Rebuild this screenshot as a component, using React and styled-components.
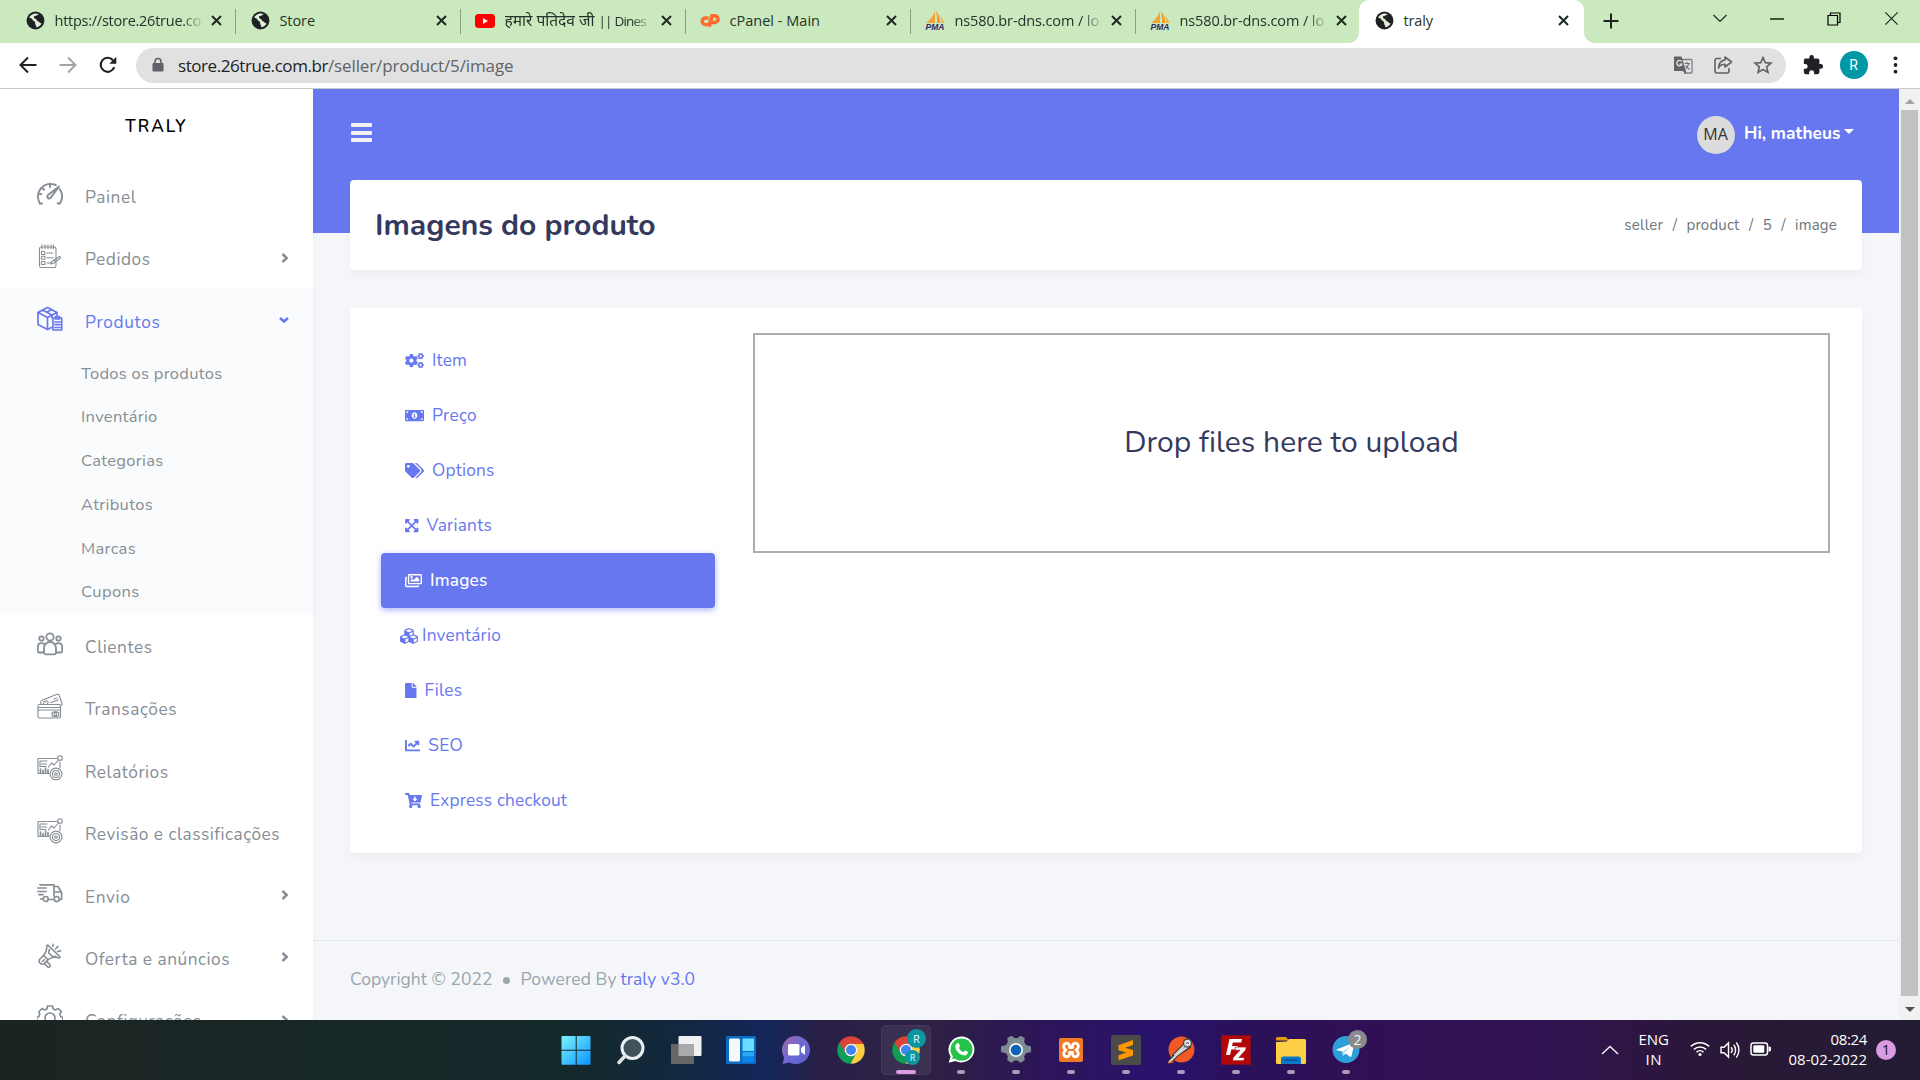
import React, { useLayoutEffect, useRef, useState } from "react";
import styled, { createGlobalStyle, css } from "styled-components";
import {
  FaCogs, FaMoneyBillAlt, FaTags, FaExpandArrowsAlt, FaRegImages, FaCubes, FaFile, FaChartLine, FaCartArrowDown,
} from "react-icons/fa";

const brand = "#6777ef";
const uiFont = `"Nunito", "Lato", "Open Sans", sans-serif`;
const osFont = `"Segoe UI", "Open Sans", "Noto Sans", sans-serif`;

const GlobalStyle = createGlobalStyle`
  *, *::before, *::after { box-sizing: border-box; }
  html, body { margin: 0; padding: 0; overflow: hidden; }
  svg { display: block; flex: none; }
`;

/* ---------- text tracked to a known measure ---------- */
const Tracked = styled.span`
  display: inline-block;
  white-space: nowrap;
`;

function Fit({ w, children }) {
  const ref = useRef(null);
  const [spacing, setSpacing] = useState(0);
  useLayoutEffect(() => {
    const natural = ref.current.getBoundingClientRect().width;
    const n = String(children).length;
    setSpacing((w + 1.5 - natural) / n);
  }, [w, children]);
  return <Tracked ref={ref} style={{ letterSpacing: spacing }}>{children}</Tracked>;
}

const Desktop = styled.div`
  width: 1920px;
  height: 1080px;
  display: flex;
  flex-direction: column;
  overflow: hidden;
  background: #fff;
  font-family: ${uiFont};
`;

/* ---------- browser tab strip ---------- */
const TabStrip = styled.div`
  height: 43px;
  flex: none;
  display: flex;
  padding-left: 10px;
  background: #cae9be;
  font-family: ${osFont};
  font-size: 14.5px;
  color: #26322a;
`;

const TabBox = styled.div`
  position: relative;
  width: 225px;
  height: 43px;
  display: flex;
  align-items: center;
  padding: 0 13.5px 2px 15px;
  gap: 9.5px;
  ${(p) => p.$active ? css`
    margin-left: -1px;
    padding-right: 15px;
    background: #fff;
    border-radius: 10px 10px 0 0;
    &::before, &::after {
      content: "";
      position: absolute;
      bottom: 0;
      width: 10px;
      height: 10px;
    }
    &::before { left: -10px; background: radial-gradient(circle at 0 0, transparent 9.5px, #fff 10px); }
    &::after { right: -10px; background: radial-gradient(circle at 100% 0, transparent 9.5px, #fff 10px); }
  ` : ""}
`;

const TabDivider = styled.i`
  position: absolute;
  right: -1px;
  top: 9px;
  width: 1.5px;
  height: 25px;
  background: #84a07c;
`;

const TabIcon = styled.span`
  width: 20px;
  display: flex;
  justify-content: center;
`;

const TabTitle = styled.span`
  flex: 1;
  white-space: nowrap;
  line-height: 22px;
  margin-right: -1px;
  ${(p) => p.$fade && css`
    mask-image: linear-gradient(90deg, #000 86%, rgba(0, 0, 0, 0.2) 98%);
  `}
`;

const Hindi = styled.span`
  display: inline-block;
  margin-right: 4px;
  font-size: 15.5px;
  line-height: 20px;
`;

const Narrow = styled.span`
  font-size: 13.5px;
`;

const NewTab = styled.div`
  width: 53px;
  display: flex;
  align-items: center;
  justify-content: center;
  padding-bottom: 1px;
`;

const WindowButtons = styled.div`
  margin-left: auto;
  height: 37px;
  display: flex;
  align-items: center;
  gap: 43px;
  padding-right: 21px;
`;

/* ---------- address bar ---------- */
const Toolbar = styled.div`
  height: 46px;
  flex: none;
  display: flex;
  align-items: center;
  padding: 0 20px 1px 17.5px;
  border-bottom: 1px solid #c6c8ca;
  font-family: ${osFont};
`;

const NavButtons = styled.div`
  width: 118px;
  display: flex;
  gap: 20px;
`;

const Address = styled.div`
  width: 1650px;
  height: 35px;
  border-radius: 18px;
  background: #e1e1e1;
  display: flex;
  align-items: center;
  padding: 0 13px 0 14px;
`;

const Url = styled.div`
  flex: 1;
  margin-left: 12.5px;
  padding-top: 1px;
  font-size: 17px;
  line-height: 24px;
  color: #202124;
`;

const UrlPath = styled.b`
  font-weight: 400;
  color: #5f6368;
`;

const AddressIcons = styled.div`
  display: flex;
  gap: 20px;
`;

const PuzzleSlot = styled.span`
  margin-left: 16px;
`;

const ProfileBadge = styled.span`
  width: 28px;
  height: 28px;
  margin: 0 25px 0 16px;
  border-radius: 50%;
  background: #0097a7;
  color: #fff;
  font: 400 14px/28px Roboto, sans-serif;
  text-align: center;
`;

/* ---------- page ---------- */
const Viewport = styled.div`
  height: 931px;
  flex: none;
  display: flex;
  overflow: hidden;
`;

const Sidebar = styled.aside`
  position: relative;
  z-index: 1;
  width: 313px;
  flex: none;
  background: #fff;
  box-shadow: 0 4px 8px rgba(0, 0, 0, 0.03);
`;

const Brand = styled.div`
  height: 75px;
  display: flex;
  align-items: center;
  justify-content: center;
  padding-bottom: 1px;
  font-size: 17px;
  font-weight: 650;
  color: #000;
`;

const MenuGroup = styled.div`
  background: ${(p) => (p.$active ? "#fafbfc" : "transparent")};
`;

const MenuRow = styled.div`
  height: 62.45px;
  display: flex;
  align-items: center;
  padding: 0 24.5px 0 37px;
  font-size: 17.3px;
  font-weight: 450;
  color: ${(p) => (p.$active ? brand : "#868e96")};
  > svg:first-child { margin: -3px 22px 0 0; }
`;

const MenuLabel = styled.span`
  flex: 1;
  padding-top: 4.5px;
`;

const SubRow = styled.div`
  height: 43.75px;
  display: flex;
  align-items: center;
  padding-left: 81px;
  font-size: 16.5px;
  color: #868e96;
`;

const Main = styled.main`
  flex: 1;
  display: flex;
  flex-direction: column;
  background: linear-gradient(${brand} 144px, #f4f6f9 144px);
`;

const Navbar = styled.header`
  height: 91px;
  flex: none;
  display: flex;
  align-items: center;
  padding: 0 45px 4px 38px;
`;

const Hamburger = styled.div`
  width: 21px;
  height: 19px;
  display: flex;
  flex-direction: column;
  justify-content: space-between;
  i { height: 4px; border-radius: 1px; background: #f2f2f4; }
`;

const Account = styled.div`
  margin-left: auto;
  display: flex;
  align-items: center;
  color: #fff;
  font-size: 17.3px;
  font-weight: 700;
`;

const UserName = styled.span`
  padding-top: 1px;
`;

const Avatar = styled.span`
  width: 38px;
  height: 38px;
  margin: 4px 9.5px 0 0;
  border-radius: 50%;
  background: #dcdcdc;
  color: #333;
  font: 400 16px/37px "Open Sans", sans-serif;
  text-align: center;
`;

const Caret = styled.i`
  margin: -2px 0 0 3.5px;
  border: 5px solid transparent;
  border-top-color: #fff;
  border-bottom: 0;
`;

const Card = styled.section`
  flex: none;
  margin: 0 37px 0;
  background: #fff;
  border-radius: 4px;
  box-shadow: 0 5px 10px rgba(0, 0, 0, 0.03);
`;

const TitleCard = styled(Card)`
  height: 90px;
  margin-bottom: 38px;
  padding: 0 25px 0 25px;
  display: flex;
  align-items: center;
  justify-content: space-between;
`;

const Title = styled.h1`
  margin: 2.5px 0 0;
  font-size: 30px;
  line-height: 36px;
  font-weight: 700;
  color: #34395e;
`;

const Crumbs = styled.nav`
  display: flex;
  gap: 9.5px;
  font-size: 15px;
  color: #6c757d;
`;

const EditorCard = styled(Card)`
  height: 545px;
  padding: 25px 32px 25px 31px;
  display: flex;
  gap: 38px;
`;

const Pills = styled.div`
  width: 334px;
`;

const Pill = styled.div`
  height: 55px;
  display: flex;
  align-items: center;
  padding-left: ${(p) => (p.$tight ? 19 : 24)}px;
  gap: ${(p) => (p.$tight ? 4 : 8)}px;
  border-radius: 4px;
  font-size: 17.3px;
  font-weight: 380;
  color: ${brand};
  ${(p) => p.$active && css`
    background: ${brand};
    color: #fff;
    font-weight: 500;
    box-shadow: 0 2px 6px #acb5f6;
  `}
`;

const Dropzone = styled.div`
  flex: 1;
  height: 220px;
  display: flex;
  align-items: center;
  justify-content: center;
  padding-bottom: 2px;
  border: 2px solid #adadad;
  font-size: 30px;
  font-weight: 380;
  color: #34395e;
`;

const Footer = styled.footer`
  height: 80px;
  margin-top: auto;
  display: flex;
  align-items: center;
  padding: 0 0 3px 37px;
  border-top: 1px solid #e3eaef;
  font-size: 17.5px;
  font-weight: 380;
  color: #98a6ad;
`;

const Bullet = styled.i`
  width: 7px;
  height: 7px;
  margin: 2px 10.5px 0;
  border-radius: 50%;
  background: #98a6ad;
`;

const FooterLink = styled.span`
  margin-left: 4px;
  color: ${brand};
`;

const Scrollbar = styled.div`
  width: 21px;
  flex: none;
  display: flex;
  flex-direction: column;
  align-items: center;
  background: #f1f1f1;
`;

const ScrollArrow = styled.div`
  height: ${(p) => (p.$down ? 24 : 21)}px;
  display: flex;
  align-items: center;
  padding-top: ${(p) => (p.$down ? 2 : 3)}px;
  &::before {
    content: "";
    border: 5px solid transparent;
    ${(p) => (p.$down ? "border-top-color: #505050; border-bottom: 0;" : "border-bottom-color: #a3a3a3; border-top: 0;")}
  }
`;

const Thumb = styled.div`
  width: 17px;
  flex: 1;
  background: #c1c1c1;
`;

/* ---------- taskbar ---------- */
const Taskbar = styled.div`
  height: 60px;
  flex: none;
  display: flex;
  align-items: center;
  padding: 0 24px 0 548px;
  background: linear-gradient(90deg, #1c2422 0, #14292a 560px, #11283f 680px, #13265a 765px, #2a2048 820px,
    #2d2142 930px, #2c1558 1040px, #29126c 1160px, #2b1158 1260px, #330f55 1390px, #30124f 1560px, #2a1838 1700px, #231c33 1920px);
  color: #fff;
  font-family: ${osFont};
`;

const AppSlot = styled.div`
  position: relative;
  width: 55px;
  height: 60px;
  flex: none;
  display: flex;
  align-items: center;
  justify-content: center;
`;

const AppTile = styled.div`
  width: 50px;
  height: 50px;
  display: flex;
  align-items: center;
  justify-content: center;
  border-radius: 5px;
  ${(p) => p.$active && css`
    background: rgba(255, 255, 255, 0.07);
    box-shadow: inset 0 0 0 1px rgba(255, 255, 255, 0.06);
  `}
`;

const Indicator = styled.i`
  position: absolute;
  bottom: 6px;
  left: 50%;
  transform: translateX(-50%);
  width: ${(p) => (p.$active ? 20 : 8)}px;
  height: 4px;
  border-radius: 2px;
  background: ${(p) => (p.$active ? "#d99ce2" : "#a69bb8")};
`;

const AppBadge = styled.span`
  position: absolute;
  left: ${(p) => p.$x}px;
  top: ${(p) => p.$y}px;
  width: ${(p) => p.$size}px;
  height: ${(p) => p.$size}px;
  border-radius: 50%;
  background: ${(p) => p.$bg};
  color: #f0f5f5;
  font-size: ${(p) => p.$font}px;
  line-height: ${(p) => p.$size}px;
  text-align: center;
`;

const Tray = styled.div`
  margin-left: auto;
  display: flex;
  align-items: center;
  font-size: 15px;
  line-height: 20px;
`;

const TrayText = styled.div`
  display: flex;
  flex-direction: column;
  align-items: ${(p) => p.$align};
  margin-right: ${(p) => p.$gap}px;
  padding-bottom: 2px;
`;

const TrayIcons = styled.div`
  display: flex;
  gap: 10px;
  margin-right: ${(p) => p.$gap}px;
`;

const Notice = styled.span`
  width: 20px;
  height: 20px;
  border-radius: 50%;
  background: #d99ce2;
  color: #111;
  font-size: 14px;
  text-align: center;
`;

/* ---------- browser drawings ---------- */
const Globe = () => (
  <svg width="19" height="19" viewBox="0 0 24 24">
    <circle cx="12" cy="12" r="11.3" fill="#202124" />
    <path d="M14 2.500c-2 1-1.500 2.500-3.500 3.300-2 .8-2.500 2-1.500 3.200s3.500.4 4.200 1.700c.6 1.200 2.300 1.400 3.600 1.500 1.500.2 2.200 1.600 4.600 1.300-.6 3.500-3 6.200-6 7.300.7-1.700-.4-2.600-1.500-3.200-1.600-.9-.6-2.700-2.100-3.500-1.500-.9-3.100-.6-4.200-1.900C6.400 10.700 4.500 11 2.500 10.800 3 8 4.600 5.700 6.500 4.300 8.500 2.800 11.500 2 14 2.500z" fill="#dff0d8" transform="rotate(18 12 12) scale(.92) translate(1 1)" />
  </svg>
);
const Cross = ({ s = 11, w = 2 }) => (
  <svg width={s} height={s} viewBox="0 0 11 11" stroke="#1f2a22" strokeWidth={w}><path d="M1 1l9 9M10 1l-9 9" /></svg>
);
const YouTube = () => (
  <svg width="20" height="14" viewBox="0 0 20 14"><rect width="20" height="14" rx="3.500" fill="#f00" /><path d="M8 4l5 3-5 3z" fill="#fff" /></svg>
);
const CPanel = () => (
  <svg width="21" height="15" viewBox="0 0 21 15" fill="none" stroke="#ff6c2c" strokeWidth="3.400">
    <path d="M8.500 5H5.500a3.200 3.200 0 0 0 0 6.600H8c1 0 1.500-.7 1.700-1.500L12 2" /><path d="M10.500 9.500h4.200a3.400 3.400 0 0 0 0-6.800h-2.500l-2.900 11" />
  </svg>
);
const Pma = () => (
  <svg width="20" height="20" viewBox="0 0 20 20">
    <path d="M10 0v12H1C5 9 8.500 5 10 0z" fill="#f2a33a" /><path d="M11 0c1 5 1.500 9 1 12h3c.5-4-1.500-9-4-12z" fill="#f59a1b" />
    <path d="M14.500 4c1.500 3 2 5.500 1.500 8h3.500c-1-3-3-6-5-8z" fill="#f7b04c" />
    <text x="10" y="19.400" textAnchor="middle" fontFamily="Liberation Sans, sans-serif" fontSize="8.500" fontWeight="700" fontStyle="italic" fill="#2e2a63">PMA</text>
  </svg>
);
const Line = ({ w, h = w, d, c = "#202124", sw = 2 }) => (
  <svg width={w} height={h} viewBox={`0 0 ${w} ${h}`} fill="none" stroke={c} strokeWidth={sw}><path d={d} /></svg>
);
const Reload = () => (
  <svg width="20" height="20" viewBox="0 0 20 20" fill="none" stroke="#202124" strokeWidth="2.100">
    <path d="M16.300 12.200A7 7 0 1 1 15 5.200" /><path d="M18.300 1.800v7h-7z" fill="#202124" stroke="none" />
  </svg>
);
const Lock = () => (
  <svg width="16" height="16" viewBox="0 0 16 16"><rect x="2.500" y="6" width="11" height="8.500" rx="1" fill="#5f6368" /><path d="M5 6V4.500a3 3 0 0 1 6 0V6" fill="none" stroke="#5f6368" strokeWidth="1.600" /></svg>
);
const Translate = () => (
  <svg width="20" height="20" viewBox="0 0 20 20">
    <path d="M8 4.500h10a1 1 0 0 1 1 1V17a1 1 0 0 1-1 1h-7" fill="none" stroke="#7c7f83" strokeWidth="1.300" />
    <path d="M2 1.500h6.500L13 16H2a1 1 0 0 1-1-1V2.500a1 1 0 0 1 1-1z" fill="#5f6368" />
    <path d="M10 16l2.500 3 .5-3z" fill="#5f6368" />
    <path d="M8.700 6.500A2.700 2.700 0 1 0 9 9.200H6.500" fill="none" stroke="#e1e1e1" strokeWidth="1.300" />
    <path d="M11.500 8.500H17M14 7v1.500M15.800 8.500c-.5 2.500-2 4-3 5M12.800 10.500c1 1.500 2.200 2.700 3.700 4" fill="none" stroke="#6f7276" strokeWidth="1.200" />
  </svg>
);
const Share = () => (
  <svg width="20" height="20" viewBox="0 0 20 20" fill="none" stroke="#5f6368" strokeWidth="1.600">
    <path d="M8 3.500H4a2 2 0 0 0-2 2V16a2 2 0 0 0 2 2h10a2 2 0 0 0 2-2v-3" /><path d="M12 2l6.500 5-6.500 5V9.300c-3 0-5 1-6.500 3.700C5.800 8.500 8 5.500 12 4.900z" strokeLinejoin="round" />
  </svg>
);
const Star = () => (
  <svg width="20" height="20" viewBox="0 0 24 24" fill="none" stroke="#5f6368" strokeWidth="2"><path d="M12 3l2.700 6.200 6.800.6-5.100 4.500 1.500 6.600L12 17.400l-5.900 3.500 1.500-6.600-5.100-4.500 6.800-.6z" /></svg>
);
const Puzzle = () => (
  <svg width="22" height="22" viewBox="0 0 24 24" fill="#202124"><path d="M20.500 11H19V7a2 2 0 0 0-2-2h-4V3.500a2.500 2.500 0 0 0-5 0V5H4a2 2 0 0 0-2 2v3.800h1.500a2.700 2.700 0 0 1 0 5.400H2V20a2 2 0 0 0 2 2h3.800v-1.500a2.700 2.700 0 0 1 5.400 0V22H17a2 2 0 0 0 2-2v-4h1.500a2.500 2.500 0 0 0 0-5z" /></svg>
);
const Dots = () => (
  <svg width="5" height="18" viewBox="0 0 5 18" fill="#202124"><circle cx="2.500" cy="2.300" r="1.900" /><circle cx="2.500" cy="9" r="1.900" /><circle cx="2.500" cy="15.700" r="1.900" /></svg>
);

/* ---------- sidebar drawings ---------- */
const SideIcon = ({ sw = 1.5, children }) => (
  <svg width="26" height="26" viewBox="0 0 26 26" fill="none" stroke="currentColor" strokeWidth={sw} strokeLinecap="round" strokeLinejoin="round">{children}</svg>
);
const Gauge = () => (
  <SideIcon sw={2}>
    <path d="M5 22.500l-2 .2C.3 18 .2 12 3.700 7.700 7.500 3 13.500 1.800 18.700 4M22.800 8.300c3 4.500 3 10-.1 14.400l-2-.4M13 2.500v3.400M5 7l2 1.600M1.500 13h2.600" />
    <path d="M22 5.500L11 14c-1.800 2.300.8 4.500 2.800 2.700z" />
  </SideIcon>
);
const Orders = () => (
  <SideIcon sw={1.1}>
    <rect x="2.500" y="4" width="16.500" height="20.500" rx="1.800" />
    <path d="M5 1.800v4M8 1.800v4M11 1.800v4M14 1.800v4M16.500 1.800v4M10 10h6M10 14.800h6M10 20h4" />
    <rect x="4.500" y="8.500" width="3.400" height="3" /><rect x="4.500" y="13.300" width="3.400" height="3" /><rect x="4.500" y="18.500" width="3.400" height="3" />
    <path d="M13.500 21l1.500-2.800 7-4.500c1.400-.4 2 .7 1.200 1.500l-6.800 5zM17 17l1.500 2" />
  </SideIcon>
);
const Box = () => (
  <SideIcon sw={1.7}>
    <path d="M1 6.500L10.500 1.500 20 6.500v3M1 6.500v12l9.500 5 4-2M1 6.500l9.500 5 9.500-5M10.500 11.500v12M5.500 4l9.500 5v3M9.500 6.200l5.500-2.700" />
    <path d="M16 12h8.700v12H16z" /><path d="M18.500 10.500h4v2.500h-4zM18 16h5M18 18.700h5M18 21.500h5" />
  </SideIcon>
);
const People = () => (
  <SideIcon sw={1.8}>
    <circle cx="13" cy="6" r="3.700" /><circle cx="4.500" cy="7.500" r="2.200" /><circle cx="21.500" cy="7.500" r="2.200" />
    <path d="M7 21.500v-4.500a6 6 0 0 1 12 0v4.500c0 1-1 1.800-2 1.800H9c-1 0-2-.8-2-1.800zM7 21.500H2c-.8 0-1.200-.5-1.200-1.200V16c0-2.500 1.400-3.800 3.700-3.800 1.200 0 2.200.4 3 1.100M19 21.500h5c.8 0 1.200-.5 1.200-1.200V16c0-2.500-1.400-3.800-3.700-3.800-1.200 0-2.200.4-3 1.100" />
  </SideIcon>
);
const Cards = () => (
  <SideIcon sw={1.1}>
    <rect x="1" y="11.500" width="22.500" height="13.500" rx="1.500" /><path d="M1 14.500h22.500M1 17h22.500" />
    <path d="M3.800 11.500V8.800c0-.8.4-1.200 1-1.400L20 1.200c1-.4 1.700 0 2 .8l3 8.500c.3.900-.3 1.500-1.500 1.900M6.500 10.500l.8-2 2.700-.7 1.200 1-.7 2.200M14 9.500l7-2.500M17 6l3-1" />
    <circle cx="17.200" cy="21.200" r="2.300" /><circle cx="19.500" cy="21.200" r="2.300" />
  </SideIcon>
);
const Report = () => (
  <SideIcon sw={1.1}>
    <path d="M12 18.500H1V3.500h19M23 7v6M1 3.500v15" />
    <path d="M3 6h7M4.500 9h5M3 6v5.500h6" /><path d="M3.500 18v-4M6 18v-2.500M8.500 18v-5M11 18v-3.500" strokeWidth="1.700" />
    <path d="M11.500 12l3-4 2.500 2 4.500-5" /><circle cx="23" cy="3" r="2.300" />
    <circle cx="19" cy="19" r="5.900" /><circle cx="19" cy="19" r="3.500" /><circle cx="19" cy="19" r="1.300" />
  </SideIcon>
);
const Truck = () => (
  <SideIcon sw={1.7}>
    <path d="M3 4.800h14V16M17 6.500h4l3.600 6v7h-2M1 8h8M1 11.500h8M2 14.700h4M3.500 19h2.700M11 19.500h6M18.500 12h5.500" />
    <circle cx="8.700" cy="19" r="2.500" /><circle cx="19.700" cy="19" r="2.500" />
  </SideIcon>
);
const Megaphone = () => (
  <SideIcon sw={1.6}>
    <path d="M10.800 2.200L22.800 13.500c.6.900-.4 1.600-1.300 1.200-3.800-1-7-.5-10.500 2L6.500 12.500C9 9.500 10 6.500 9.700 3.300c0-1 .5-1.500 1.100-1.100zM12.300 6.500l-.6 3.500 4 3.700 3.300-.5" />
    <path d="M6.500 12.500l-3.700 3.700c-1.200 1.400-.8 3.200.5 4.200 1.200 1 3 1 4.200 0L11 16.700M5.500 18.500l2-2M10 18.500l3.300 3.700c.2 1.500-1.300 2.500-2.500 1.800L7.300 20.500M16 3.500V1.200M18.500 6l2.500-2.700M20.500 8.500l3-.6" />
  </SideIcon>
);
const Gear = () => (
  <SideIcon sw={1.7}>
    <path d="M10.500 1h5l.8 3 2.200 1 2.800-1.500 3 3-1.500 2.700 1 2.500 2 .6v5l-2.500.7-1 2.300 1.500 2.700-3.300 3.200-2.600-1.500-2.400 1-.7 2h-4.600l-.7-2-2.400-1-2.600 1.500-3.300-3.200 1.500-2.700-1-2.300-2-.7v-5l2-.6 1-2.500L2 6.500l3-3L7.700 5l2.200-1z" /><circle cx="13" cy="13" r="5" />
  </SideIcon>
);
const Chevron = ({ down }) => (
  <svg width={down ? 10 : 8} height="10" viewBox={down ? "0 0 10 10" : "0 0 8 10"} fill="none" stroke="currentColor" strokeWidth="2.500">
    <path d={down ? "M1 3l4 3.500L9 3" : "M1.500 1l4.200 4-4.200 4"} />
  </svg>
);

/* ---------- taskbar drawings ---------- */
const Svg32 = ({ children }) => <svg width="32" height="32" viewBox="0 0 32 32">{children}</svg>;
const WinLogo = () => (
  <Svg32>
    <defs><linearGradient id="win" x1="0" y1="0" x2="1" y2="1"><stop stopColor="#7df3ff" /><stop offset="1" stopColor="#0a94ff" /></linearGradient></defs>
    <path d="M2.500 2h13.200v13.700H1.500V3a1 1 0 0 1 1-1zM16.700 2h12.800a1 1 0 0 1 1 1v12.700H16.700zM1.500 16.700h14.200v14H2.500a1 1 0 0 1-1-1zM16.700 16.700h13.800v13a1 1 0 0 1-1 1H16.700z" fill="url(#win)" />
  </Svg32>
);
const Search = () => (
  <Svg32><circle cx="17.500" cy="14" r="10.500" fill="#40535d" stroke="#eceff1" strokeWidth="3" /><path d="M10 22l-6 6.500" stroke="#dfe3e6" strokeWidth="3.500" strokeLinecap="round" /></Svg32>
);
const TaskView = () => (
  <Svg32><rect x="8.500" y="2" width="23" height="20" rx="1" fill="#f1f1f1" /><rect x="1" y="10" width="23" height="20" rx="1" fill="#666" /><path d="M8.500 10H24v12H8.500z" fill="#a9aaab" /></Svg32>
);
const Widgets = () => (
  <Svg32><rect x="1" y="2" width="30" height="28" rx="1.500" fill="#0b6cc4" /><rect x="4" y="4.500" width="11" height="23" rx="1.500" fill="#f6f8fb" /><rect x="17.500" y="4.500" width="11.500" height="12.500" fill="#6bdcff" /><rect x="17.500" y="18" width="11.500" height="4.500" fill="#27a7f7" /><rect x="17.500" y="23" width="11.500" height="5" fill="#0a85ee" /></Svg32>
);
const Chat = () => (
  <Svg32>
    <defs><linearGradient id="chat" x1="0" y1="0" x2="1" y2="1"><stop stopColor="#a06ca8" /><stop offset=".5" stopColor="#6f67d2" /><stop offset="1" stopColor="#5a5fce" /></linearGradient></defs>
    <path d="M16 2a14 14 0 1 1-6.500 26.400L2.500 30l1.700-6.500A14 14 0 0 1 16 2z" fill="url(#chat)" />
    <rect x="8" y="10" width="11.500" height="11.500" rx="1.500" fill="#fff" /><path d="M21 14l4-3v10l-4-3z" fill="#fff" />
  </Svg32>
);
const Chrome = () => (
  <Svg32>
    <path d="M16 16L4.050 9.100A13.800 13.800 0 0 1 27.950 9.100z" fill="#db4437" />
    <path d="M16 16L27.950 9.100A13.800 13.800 0 0 1 16 29.800z" fill="#ffcd40" />
    <path d="M16 16L16 29.800A13.800 13.800 0 0 1 4.050 9.100z" fill="#0f9d58" />
    <path d="M16 9.700h12.300L22 14z" fill="#ffcd40" /><path d="M16 9.700h12.300l-.4-1H15z" fill="#db4437" />
    <path d="M10.500 19.100L4.400 8.500l5.600 4z" fill="#db4437" /><path d="M21.500 19.100L15.500 29.800l-1.500-7z" fill="#0f9d58" />
    <circle cx="16" cy="16" r="6.300" fill="#f5f5f5" /><circle cx="16" cy="16" r="5" fill="#4285f4" />
  </Svg32>
);
const WhatsApp = () => (
  <Svg32>
    <path d="M16.500 2.500A13 13 0 1 1 10.300 27L3.700 28.800l1.800-6.400A13 13 0 0 1 16.500 2.500z" fill="#fff" />
    <circle cx="16.500" cy="15.600" r="11" fill="#25c348" /><path d="M7 25.300l1.500-4.500 3 3z" fill="#25c348" />
    <path d="M12 9.500c1-.8 1.700-.5 2.100.6l.8 1.900c.2.800-.8 1.400-1 1.900 1 2 2.500 3.300 4.500 4.200.7-.2 1-1.400 1.800-1.500l2.500 1.200c.5.500 0 3-2 3.500-5 1-11.500-5-10.300-10 .2-.7.900-1.400 1.600-1.800z" fill="#fff" />
  </Svg32>
);
const Settings = () => (
  <Svg32>
    <path d="M11.500 1.700l3 2.300h3l3-2.300 4.200 2.300-.5 4 1.800 3 5 1.500v5.500l-5 1.300-1.800 3 .5 4-4.200 2.500-3-2.400h-3l-3 2.400L7.300 26.300l.5-4-1.800-3-5-1.300v-5.500l5-1.500 1.800-3-.5-4z" fill="#7e8b92" />
    <circle cx="16" cy="16" r="7" fill="#f2f3f4" /><circle cx="16" cy="16" r="5.300" fill="#0c63b5" />
  </Svg32>
);
const Xampp = () => (
  <Svg32><rect x="4" y="4" width="24" height="24" rx="2" fill="#f27a25" /><path d="M10.500 9.500c2-.8 4 .5 4 2.500v1.500h3V12c0-2 2-3.300 4-2.500 2.500 1 2.500 5-.5 6.500 3 1.500 3 5.500.5 6.500-2 .8-4-.5-4-2.500v-1.500h-3V20c0 2-2 3.300-4 2.500-2.500-1-2.500-5 .5-6.500-3-1.500-3-5.500-.5-6.500z" fill="none" stroke="#fff" strokeWidth="2.800" strokeLinejoin="round" /></Svg32>
);
const Sublime = () => (
  <Svg32><rect x="1" y="1" width="30" height="30" rx="1.500" fill="#4a4a4a" /><path d="M8.500 11.200L23 6v5l-8 2.800L23 16v5.500L8.500 26.300v-5l8-2.800-8-2.300z" fill="#ff9800" /></Svg32>
);
const Postman = () => (
  <Svg32><circle cx="16.500" cy="15.500" r="13" fill="#f15a24" /><path d="M21.500 9.500L9 22M24 12.500L12 20.500 5 27.500" stroke="#33312f" strokeWidth="4" strokeLinecap="round" /><path d="M21.500 9.500L10 21M23.500 12L12 20.500 4.500 28" stroke="#d5d5d5" strokeWidth="2.200" strokeLinecap="round" /><circle cx="22.500" cy="9" r="4" fill="#ddd" stroke="#444" strokeWidth="1.300" /><path d="M21 9.500a2 2 0 0 1 3 0" stroke="#444" fill="none" /><path d="M2.500 29.500l4.500-3 2 2z" fill="#f15a24" /></Svg32>
);
const FileZilla = () => (
  <Svg32>
    <rect x="2" y="2" width="28" height="28" fill="#b30808" stroke="#b30808" strokeWidth="2" strokeDasharray="2 1.200" />
    <path d="M6 21L9.500 5H22l-.8 3.500h-8.400l-.8 3.500h6l-.7 3.500h-6L10 21z" fill="#fff" /><path d="M15.500 13h10.800l-.6 3-6.700 7.500h5.500l-.7 3.200H12.500l.7-3.200 6.700-7.300h-5z" fill="#fff" stroke="#b30808" strokeWidth=".7" />
  </Svg32>
);
const Folder = () => (
  <Svg32><path d="M1 4.500a1.500 1.500 0 0 1 1.500-1.500H11l3 3.500H1z" fill="#dd9c05" /><path d="M1 8l10.500-.5L14 5h15.500A1.500 1.500 0 0 1 31 6.500v22a1.500 1.500 0 0 1-1.500 1.500h-27A1.500 1.500 0 0 1 1 28.500z" fill="#fdcf44" /><path d="M6 30v-5a2.500 2.500 0 0 1 2.500-2.500h15A2.500 2.500 0 0 1 26 25v5z" fill="#0b77c9" /><path d="M9.500 26h13" stroke="#034a85" strokeWidth="1.200" /></Svg32>
);
const Telegram = () => (
  <Svg32><circle cx="16" cy="15.500" r="13.500" fill="#2ba0da" /><path d="M6.500 15.500L23 9c1-.3 1.500.2 1.300 1.200L21.500 22c-.2 1-1 1.200-1.800.6l-4-3-2.700 2.200-.5-4.300-5.800-1.300z" fill="#fff" /><path d="M12.500 17.500l8.500-5.500-6.500 6.800-1.500 3z" fill="#b9d8ec" /></Svg32>
);

/* ---------- data ---------- */
const tabs = [
  { icon: <Globe />, title: "https://store.26true.co", w: 145, fade: true },
  { icon: <Globe />, title: "Store", w: 34 },
  { icon: <YouTube />, hindi: "हमारे पतिदेव जी", title: "|| Dines", w: 46, fade: true },
  { icon: <CPanel />, title: "cPanel - Main", w: 89 },
  { icon: <Pma />, title: "ns580.br-dns.com / lo", w: 143, fade: true },
  { icon: <Pma />, title: "ns580.br-dns.com / lo", w: 143, fade: true },
  { icon: <Globe />, title: "traly", w: 28, active: true },
];

const menu = [
  { icon: <Gauge />, label: "Painel", w: 50 },
  { icon: <Orders />, label: "Pedidos", w: 64, arrow: true },
  {
    icon: <Box />, label: "Produtos", w: 74, arrow: true, active: true,
    items: [["Todos os produtos", 140], ["Inventário", 75], ["Categorias", 81], ["Atributos", 70.5], ["Marcas", 53.5], ["Cupons", 57]],
  },
  { icon: <People />, label: "Clientes", w: 66 },
  { icon: <Cards />, label: "Transações", w: 90.5 },
  { icon: <Report />, label: "Relatórios", w: 82 },
  { icon: <Report />, label: "Revisão e classificações", w: 193.5 },
  { icon: <Truck />, label: "Envio", w: 44, arrow: true },
  { icon: <Megaphone />, label: "Oferta e anúncios", w: 143.5, arrow: true },
  { icon: <Gear />, label: "Configurações", w: 115, arrow: true },
];

const Glyph = ({ as: Icon, w, h = 15.2 }) => <Icon style={{ width: w, height: h }} />;

const pills = [
  { icon: <Glyph as={FaCogs} w={19} />, label: "Item", w: 33.5 },
  { icon: <Glyph as={FaMoneyBillAlt} w={19} />, label: "Preço", w: 43.5 },
  { icon: <Glyph as={FaTags} w={19} />, label: "Options", w: 61 },
  { icon: <Glyph as={FaExpandArrowsAlt} w={13.5} />, label: "Variants", w: 64 },
  { icon: <Glyph as={FaRegImages} w={17} />, label: "Images", w: 56, active: true },
  { icon: <Glyph as={FaCubes} w={18} h={18} />, label: "Inventário", w: 77.5, tight: true },
  { icon: <Glyph as={FaFile} w={11.5} />, label: "Files", w: 36.5 },
  { icon: <Glyph as={FaChartLine} w={15.2} />, label: "SEO", w: 33.5 },
  { icon: <Glyph as={FaCartArrowDown} w={17} />, label: "Express checkout", w: 135.5 },
];

const apps = [
  { icon: <WinLogo /> }, { icon: <Search /> }, { icon: <TaskView /> }, { icon: <Widgets /> }, { icon: <Chat /> }, { icon: <Chrome /> },
  {
    icon: <Chrome />, open: true, active: true,
    badges: [{ $x: 29, $y: 9, $size: 19, $font: 11, $bg: "#0c96a0", text: "R" }, { $x: 27, $y: 30, $size: 15, $font: 9, $bg: "#0c96a0", text: "R" }],
  },
  { icon: <WhatsApp />, open: true }, { icon: <Settings />, open: true }, { icon: <Xampp />, open: true }, { icon: <Sublime />, open: true },
  { icon: <Postman />, open: true }, { icon: <FileZilla />, open: true }, { icon: <Folder />, open: true },
  { icon: <Telegram />, open: true, badges: [{ $x: 30, $y: 10, $size: 19, $font: 14, $bg: "#8a8a8c", text: "2" }] },
];

export default function App() {
  return (
    <Desktop>
      <GlobalStyle />
      <TabStrip>
        {tabs.map((t, i) => (
          <TabBox key={i} $active={t.active}>
            <TabIcon>{t.icon}</TabIcon>
            <TabTitle $fade={t.fade}>
              {t.hindi
                ? <><Hindi>{t.hindi}</Hindi><Narrow><Fit w={t.w}>{t.title}</Fit></Narrow></>
                : <Fit w={t.w}>{t.title}</Fit>}
            </TabTitle>
            <Cross />
            {i < 5 && <TabDivider />}
          </TabBox>
        ))}
        <NewTab><Line w={16} d="M8 0.500v15M0.500 8h15" /></NewTab>
        <WindowButtons>
          <Line w={14} h={9} d="M.5 1L7 7.500 13.500 1" sw={1.200} />
          <Line w={14} h={2} d="M0 1h14" sw={1.300} c="#000" />
          <Line w={14} h={14} d="M1 3.500h9.500V13H1zM3.500 3.500V1H13v9.500h-2.500" sw={1.200} c="#000" />
          <Cross s={15} w={0.9} />
        </WindowButtons>
      </TabStrip>

      <Toolbar>
        <NavButtons>
          <Line w={20} d="M18.500 10H3M10 2.500L2.500 10l7.500 7.500" />
          <Line w={20} d="M1.500 10H17M10 2.500l7.500 7.500-7.500 7.500" c="#a2a4a6" />
          <Reload />
        </NavButtons>
        <Address>
          <Lock />
          <Url><Fit w={148.5}>store.26true.com.br</Fit><UrlPath><Fit w={184}>/seller/product/5/image</Fit></UrlPath></Url>
          <AddressIcons><Translate /><Share /><Star /></AddressIcons>
        </Address>
        <PuzzleSlot><Puzzle /></PuzzleSlot>
        <ProfileBadge>R</ProfileBadge>
        <Dots />
      </Toolbar>

      <Viewport>
        <Sidebar>
          <Brand><Fit w={61}>TRALY</Fit></Brand>
          {menu.map((m) => (
            <MenuGroup key={m.label} $active={m.active}>
              <MenuRow $active={m.active}>
                {m.icon}
                <MenuLabel><Fit w={m.w}>{m.label}</Fit></MenuLabel>
                {m.arrow && <Chevron down={m.active} />}
              </MenuRow>
              {m.items && m.items.map(([t, w]) => <SubRow key={t}><Fit w={w}>{t}</Fit></SubRow>)}
            </MenuGroup>
          ))}
        </Sidebar>

        <Main>
          <Navbar>
            <Hamburger><i /><i /><i /></Hamburger>
            <Account>
              <Avatar>MA</Avatar>
              <UserName><Fit w={95}>Hi, matheus</Fit></UserName>
              <Caret />
            </Account>
          </Navbar>

          <TitleCard>
            <Title><Fit w={279}>Imagens do produto</Fit></Title>
            <Crumbs>
              <Fit w={37.5}>seller</Fit><span>/</span>
              <Fit w={51.5}>product</Fit><span>/</span>
              <span>5</span><span>/</span>
              <Fit w={40.5}>image</Fit>
            </Crumbs>
          </TitleCard>

          <EditorCard>
            <Pills>
              {pills.map((p) => (
                <Pill key={p.label} $active={p.active} $tight={p.tight}>
                  {p.icon}
                  <Fit w={p.w}>{p.label}</Fit>
                </Pill>
              ))}
            </Pills>
            <Dropzone><Fit w={333}>Drop files here to upload</Fit></Dropzone>
          </EditorCard>

          <Footer>
            <Fit w={141}>Copyright © 2022</Fit>
            <Bullet />
            <Fit w={94.5}>Powered By</Fit>
            <FooterLink><Fit w={73}>traly v3.0</Fit></FooterLink>
          </Footer>
        </Main>

        <Scrollbar><ScrollArrow /><Thumb /><ScrollArrow $down /></Scrollbar>
      </Viewport>

      <Taskbar>
        {apps.map((a, i) => (
          <AppSlot key={i}>
            <AppTile $active={a.active}>{a.icon}</AppTile>
            {a.badges && a.badges.map(({ text, ...b }, j) => <AppBadge key={j} {...b}>{text}</AppBadge>)}
            {a.open && <Indicator $active={a.active} />}
          </AppSlot>
        ))}
        <Tray>
          <TrayIcons $gap={20}><Line w={18} h={10} d="M1 9l8-7.500L17 9" c="#f3f1f5" sw={1.500} /></TrayIcons>
          <TrayText $align="center" $gap={20.5}><Fit w={29}>ENG</Fit><Fit w={15}>IN</Fit></TrayText>
          <TrayIcons $gap={18}>
            <svg width="20" height="16" viewBox="0 0 20 16" fill="none" stroke="#fff" strokeWidth="1.500"><path d="M.8 5.500a13 13 0 0 1 18.400 0M3.800 8.500a8.800 8.800 0 0 1 12.400 0M6.500 11.200a5 5 0 0 1 7 0" /><circle cx="10" cy="13.500" r="1.600" fill="#fff" stroke="none" /></svg>
            <svg width="20" height="18" viewBox="0 0 20 18" fill="none" stroke="#fff" strokeWidth="1.400"><path d="M1 6.300h3L8.500 2v14L4 11.700H1zM11 6.200c1.400 1.600 1.400 4 0 5.600M13.700 3.700c2.500 3 2.500 7.600 0 10.600M16.300 1.500c3.500 4.200 3.500 10.800 0 15" /></svg>
            <svg width="21" height="16" viewBox="0 0 21 16"><rect x="1" y="2" width="16.500" height="12" rx="2.500" fill="none" stroke="#fff" strokeWidth="1.500" /><rect x="3.300" y="4.300" width="11" height="7.500" rx="1" fill="#fff" /><path d="M18.500 5.500h.5a1.500 1.500 0 0 1 0 5h-.5z" fill="#fff" /></svg>
          </TrayIcons>
          <TrayText $align="flex-end" $gap={9}><Fit w={35}>08:24</Fit><Fit w={77}>08-02-2022</Fit></TrayText>
          <Notice>1</Notice>
        </Tray>
      </Taskbar>
    </Desktop>
  );
}
